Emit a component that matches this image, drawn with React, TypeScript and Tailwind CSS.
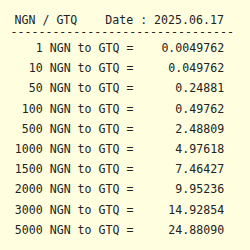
const rows: [string, string][] = [
  ["1", "0.0049762"],
  ["10", "0.049762"],
  ["50", "0.24881"],
  ["100", "0.49762"],
  ["500", "2.48809"],
  ["1000", "4.97618"],
  ["1500", "7.46427"],
  ["2000", "9.95236"],
  ["3000", "14.92854"],
  ["5000", "24.88090"],
];

export default function App() {
  return (
    <div className="w-[250px] h-[250px] overflow-hidden bg-[#ffffe0] text-[#222] font-['DejaVu_Sans_Mono',monospace] text-[11.6px]">
      <div className="pt-[14px] pl-[14.5px] leading-[13px] whitespace-pre">
        NGN / GTQ    Date : 2025.06.17
      </div>
      <div className="pl-[10.5px] leading-[10px] whitespace-pre">
        --------------------------------
      </div>
      <div className="pt-[1px] pl-[14.8px] flex flex-col">
        {rows.map(([amount, value]) => (
          <div key={amount} className="leading-[20.2px] whitespace-pre">
            {`${amount.padStart(4, " ")} NGN to GTQ = ${value.padStart(12, " ")}`}
          </div>
        ))}
      </div>
    </div>
  );
}
